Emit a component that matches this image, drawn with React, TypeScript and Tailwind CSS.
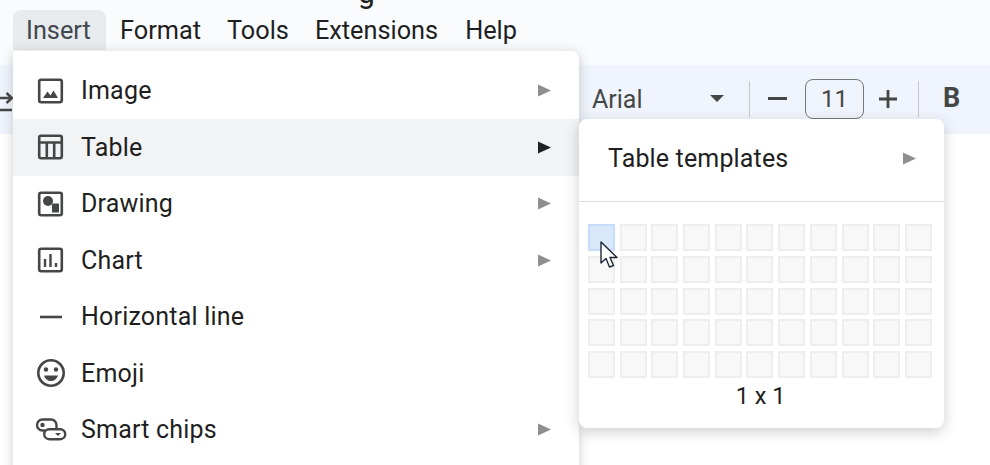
import { ReactNode } from "react";

const FONT = "font-['Roboto',sans-serif]";

function Arrow({ dark }: { dark?: boolean }) {
  return (
    <svg width="13" height="13" viewBox="0 0 13 13" className={dark ? "text-[#202124]" : "text-[#8f8f8f]"}>
      <path d="M0 0.5 L13 6.5 L0 12.5 Z" fill="currentColor" />
    </svg>
  );
}

function Icon({ children }: { children: ReactNode }) {
  return (
    <svg width="32" height="32" viewBox="0 0 32 32" fill="none" className="text-[#444746] overflow-visible">
      {children}
    </svg>
  );
}

const frame = <rect x="5.2" y="4.7" width="22.6" height="22.6" rx="2" stroke="currentColor" strokeWidth="2.6" />;

const menuItems = [
  {
    label: "Image",
    arrow: true,
    icon: (
      <Icon>
        {frame}
        <path d="M9 23 L13.5 16.5 L16.5 20.5 L19.5 15.5 L24 23 Z" fill="currentColor" />
      </Icon>
    ),
  },
  {
    label: "Table",
    arrow: true,
    active: true,
    icon: (
      <Icon>
        {frame}
        <path d="M5 11.5 H28 M12.8 11.5 V27 M20.2 11.5 V27" stroke="currentColor" strokeWidth="2.6" />
      </Icon>
    ),
  },
  {
    label: "Drawing",
    arrow: true,
    icon: (
      <Icon>
        {frame}
        <circle cx="14" cy="13" r="5" fill="currentColor" />
        <rect x="18" y="15.5" width="7" height="9" fill="currentColor" />
      </Icon>
    ),
  },
  {
    label: "Chart",
    arrow: true,
    icon: (
      <Icon>
        {frame}
        <path d="M11 15 V23 M16.5 10 V23 M22 19 V23" stroke="currentColor" strokeWidth="2.4" />
      </Icon>
    ),
  },
  {
    label: "Horizontal line",
    icon: (
      <Icon>
        <path d="M6 16 H28" stroke="currentColor" strokeWidth="2.6" />
      </Icon>
    ),
  },
  {
    label: "Emoji",
    icon: (
      <Icon>
        <circle cx="17" cy="16" r="12.7" stroke="currentColor" strokeWidth="2.6" />
        <circle cx="12" cy="12.5" r="2.2" fill="currentColor" />
        <circle cx="22" cy="12.5" r="2.2" fill="currentColor" />
        <path d="M10 18.5 H24 C23 22 20.3 24 17 24 C13.7 24 11 22 10 18.5 Z" fill="currentColor" />
      </Icon>
    ),
  },
  {
    label: "Smart chips",
    arrow: true,
    icon: (
      <Icon>
        <path d="M22.5 14.5 V11 A5.5 5.5 0 0 0 17 5.5 H8.5 A5.5 5.5 0 0 0 8.5 16.5 H11" stroke="currentColor" strokeWidth="2.4" />
        <rect x="10.2" y="15.2" width="21" height="10" rx="5" fill="#fff" stroke="currentColor" strokeWidth="2.4" />
        <circle cx="8.5" cy="11" r="2.2" fill="currentColor" />
        <path d="M21 19 H27 L24 22 Z" fill="currentColor" />
      </Icon>
    ),
  },
];

function TableGrid() {
  const cells = Array.from({ length: 55 }, (_, i) => i);
  return (
    <div className="grid grid-cols-[repeat(11,27px)] auto-rows-[27px] gap-x-[4.7px] gap-y-[4.75px]">
      {cells.map((i) => (
        <div
          key={i}
          className={
            i === 0
              ? "border-2 border-[#c6dcfb] bg-[#d9e7fb]"
              : "border-2 border-[#eeeeee] bg-[#f8f8f8]"
          }
        />
      ))}
    </div>
  );
}

export default function App() {
  return (
    <div className={`${FONT} relative w-[990px] h-[465px] overflow-hidden bg-white text-[#1f1f1f]`}>
      {/* 제목 글자 아래쪽만 보임 */}
      <span className="absolute left-[358px] -top-[25px] z-10 text-[30px] leading-[36px]">g</span>

      {/* 메뉴바 */}
      <div className="h-[65px] bg-[#f9fbfd] pl-[13px] pt-[10px]">
        <div className="flex items-start text-[25.3px] leading-[42px]">
          <div className="w-[93px] h-[40px] pl-[13px] rounded-t-lg bg-[#e8ebee] text-[#41474d]">Insert</div>
          <div className="ml-[14px]">Format</div>
          <div className="ml-[26px]">Tools</div>
          <div className="ml-[26px]">Extensions</div>
          <div className="ml-[27px]">Help</div>
        </div>
      </div>

      {/* 툴바 */}
      <div className="h-[69px] bg-[#f0f4fc] flex items-center pl-[592px] pb-[2px] text-[#444746] relative">
        <div className="w-[118px] text-[25px] mt-[2px]">Arial</div>
        <svg width="14" height="7" viewBox="0 0 14 7">
          <path d="M0 0 H14 L7 7 Z" fill="currentColor" />
        </svg>
        <div className="w-px h-[36px] bg-[#c7c7c7] ml-[25px]" />
        <div className="w-[19px] h-[3px] bg-[#444746] ml-[18px]" />
        <div className="w-[59px] h-[40px] ml-[18px] border border-[#747775] rounded-lg flex items-center justify-center text-[24px]">
          11
        </div>
        <svg width="20" height="20" viewBox="0 0 20 20" className="ml-[14px]">
          <path d="M10 1 V19 M1 10 H19" stroke="currentColor" strokeWidth="2.8" />
        </svg>
        <div className="w-px h-[36px] bg-[#c7c7c7] ml-[20px]" />
        <div className="ml-[24px] text-[27px] font-bold">B</div>
      </div>

      {/* 가려진 툴바 아이콘 조각 */}
      <svg width="14" height="24" viewBox="0 0 14 24" className="absolute left-0 top-[89px] text-[#444746]">
        <path d="M0 9 H11 M6.5 4 L12 9 L6.5 14 M0 21 H12" stroke="currentColor" strokeWidth="2.4" fill="none" />
      </svg>

      {/* Insert 메뉴 */}
      <div className="absolute left-[13px] top-[51px] w-[566px] h-[430px] bg-white rounded-b-lg rounded-tr-lg shadow-[0_2px_12px_rgba(60,64,67,0.25)] pt-[11.5px]">
        {menuItems.map((item) => (
          <div
            key={item.label}
            className={`flex items-center h-[56.5px] pl-[21px] pr-[28px] ${item.active ? "bg-[#f1f3f4]" : ""}`}
          >
            {item.icon}
            <span className="ml-[15px] flex-1 text-[25px] tracking-[0.2px]">{item.label}</span>
            {item.arrow && <Arrow dark={item.active} />}
          </div>
        ))}
      </div>

      {/* Table 서브메뉴 */}
      <div className="absolute left-[579px] top-[119px] w-[365px] h-[309px] bg-white rounded-lg shadow-[0_4px_14px_rgba(60,64,67,0.25)]">
        <div className="flex items-center h-[83px] pl-[29px] pr-[28px] border-b border-[#dadce0] pb-[3px]">
          <span className="flex-1 text-[25px] tracking-[0.15px]">Table templates</span>
          <Arrow />
        </div>
        <div className="pl-[9px] pt-[22px]">
          <TableGrid />
          <div className="mt-[0px] text-center text-[23.5px] pr-[11px] leading-[36px]">1 x 1</div>
        </div>
      </div>

      {/* 마우스 커서 */}
      <svg width="20" height="30" viewBox="0 0 20 30" className="absolute left-[600px] top-[241px]">
        <path
          d="M1 1 V22 L6 17.5 L9.5 26 L13.5 24.5 L10 16.5 L17 16.5 Z"
          fill="#fff"
          stroke="#1f2937"
          strokeWidth="1.4"
          strokeLinejoin="round"
        />
      </svg>
    </div>
  );
}
